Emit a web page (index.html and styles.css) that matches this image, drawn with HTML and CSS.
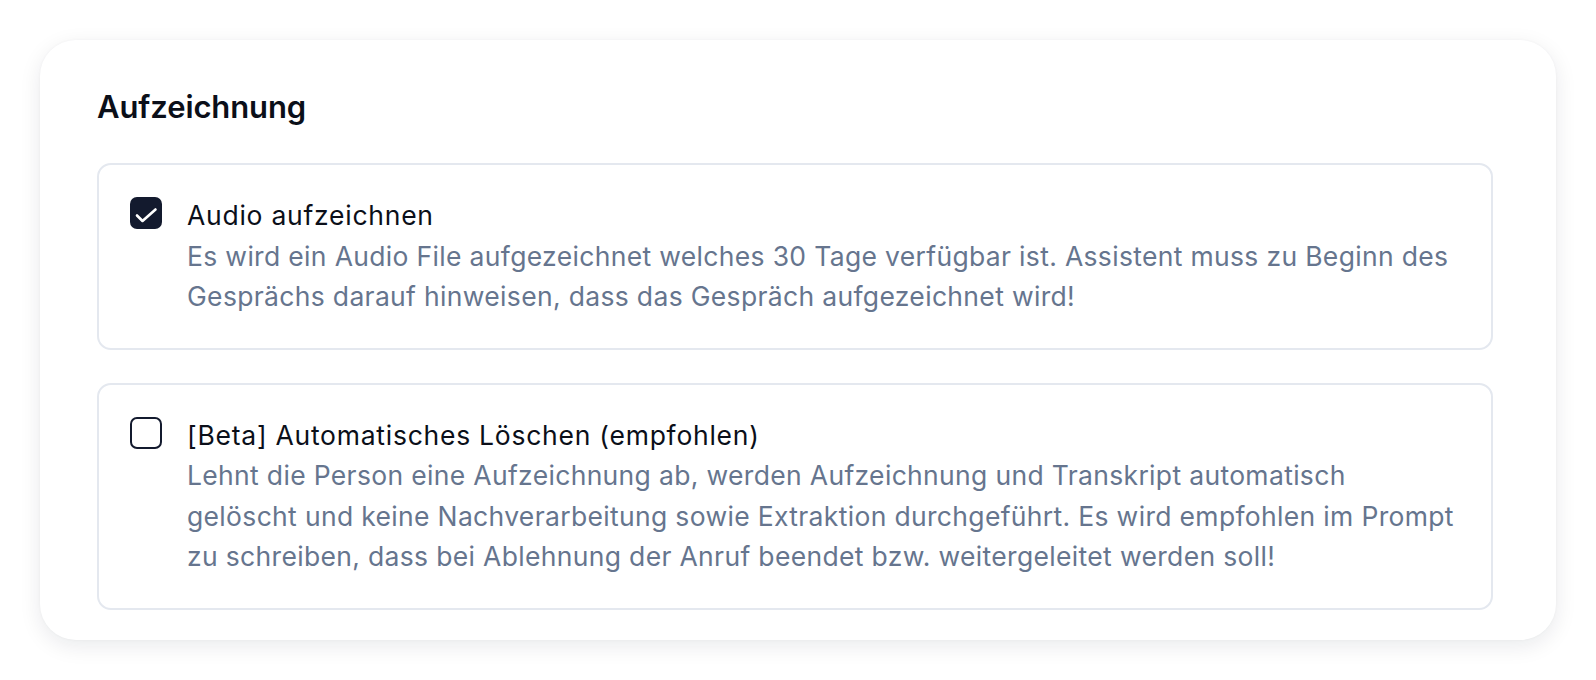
FILE: index.html
```html
<!DOCTYPE html>
<html lang="de">
<head>
<meta charset="utf-8">
<title>Aufzeichnung</title>
<link rel="stylesheet" href="styles.css">
</head>
<body>
<section class="card">
  <h2 class="title">Aufzeichnung</h2>
  <div class="options">
    <label class="option">
      <span class="box checked">
        <svg viewBox="0 0 32 32" width="32" height="32"><path d="M7 18.5 L12.5 24 L25.5 12.5" fill="none" stroke="#fff" stroke-width="2.6" stroke-linecap="round" stroke-linejoin="round"/></svg>
      </span>
      <span class="text">
        <span class="label">Audio aufzeichnen</span>
        <span class="desc">Es wird ein Audio File aufgezeichnet welches 30 Tage verfügbar ist. Assistent muss zu Beginn des Gesprächs darauf hinweisen, dass das Gespräch aufgezeichnet wird!</span>
      </span>
    </label>
    <label class="option">
      <span class="box"></span>
      <span class="text">
        <span class="label">[Beta] Automatisches Löschen (empfohlen)</span>
        <span class="desc">Lehnt die Person eine Aufzeichnung ab, werden Aufzeichnung und Transkript automatisch gelöscht und keine Nachverarbeitung sowie Extraktion durchgeführt. Es wird empfohlen im Prompt zu schreiben, dass bei Ablehnung der Anruf beendet bzw. weitergeleitet werden soll!</span>
      </span>
    </label>
  </div>
</section>
</body>
</html>
```

FILE: styles.css
```css
html, body {
  margin: 0;
  background: #ffffff;
}
body {
  padding: 40px;
  font-family: Inter, "Noto Sans", sans-serif;
  color: #0b0f19;
}
.card {
  box-sizing: border-box;
  width: 1516px;
  height: 600px;
  background: #fff;
  border-radius: 36px;
  box-shadow: 0 6px 22px rgba(15, 23, 42, 0.09), 0 0 3px rgba(15, 23, 42, 0.04);
  padding: 47px 63px 31px 57px;
}
.title {
  margin: 0;
  font-size: 31px;
  line-height: 40px;
  font-weight: 600;
  letter-spacing: -0.1px;
}
.options {
  margin-top: 36px;
  display: flex;
  flex-direction: column;
  gap: 33px;
}
.option {
  display: flex;
  gap: 25px;
  align-items: flex-start;
  border: 2px solid #e4e8ef;
  border-radius: 14px;
  padding: 30px 31px 31px 31px;
}
.box {
  flex: none;
  box-sizing: border-box;
  width: 32px;
  height: 32px;
  margin-top: 2px;
  border: 2.5px solid #131a2e;
  border-radius: 7px;
  display: flex;
}
.box.checked {
  background: #131a2e;
  border: none;
}
.box svg {
  display: block;
}
.text {
  display: flex;
  flex-direction: column;
}
.label {
  font-size: 26.5px;
  line-height: 40.5px;
  font-weight: 440;
  letter-spacing: 0.75px;
  color: #0b0f19;
}
.desc {
  font-size: 26.5px;
  line-height: 40.5px;
  letter-spacing: 0.33px;
  color: #66758e;
}
```
